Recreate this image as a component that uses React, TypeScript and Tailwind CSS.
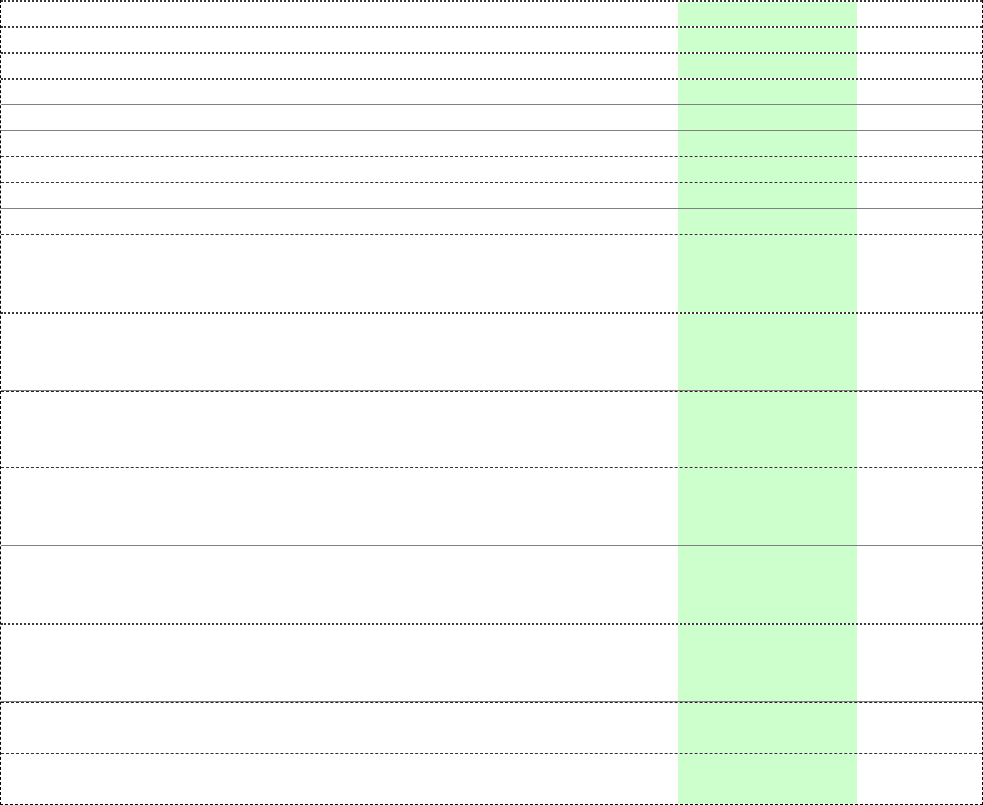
import React from 'react'

type Line = 'wavy' | 'solid' | 'dashed' | 'double'

const rows: { h: number; line: Line }[] = [
  { h: 26, line: 'wavy' },
  { h: 26, line: 'wavy' },
  { h: 26, line: 'wavy' },
  { h: 26, line: 'wavy' },
  { h: 26, line: 'solid' },
  { h: 26, line: 'solid' },
  { h: 26, line: 'dashed' },
  { h: 26, line: 'dashed' },
  { h: 26, line: 'solid' },
  { h: 78, line: 'dashed' },
  { h: 78, line: 'wavy' },
  { h: 77, line: 'double' },
  { h: 78, line: 'dashed' },
  { h: 78, line: 'solid' },
  { h: 78, line: 'wavy' },
  { h: 52, line: 'double' },
  { h: 51, line: 'dashed' },
]

const lineClass: Record<Line, string> = {
  wavy: 'border-t-2 border-dotted border-[#3a3a3a]',
  solid: 'border-t border-solid border-[#808080]',
  dashed: 'border-t border-dashed border-[#333]',
  double: 'border-t border-solid border-[#808080]',
}

export default function App() {
  return (
    <div className="w-[983px] h-[805px] bg-white">
      <div className="w-[983px] border-x border-dashed border-black border-b">
        {rows.map((r, i) => (
          <div key={i} className={`box-border flex flex-col ${lineClass[r.line]}`} style={{ height: r.h }}>
            <div
              className={`grid flex-1 grid-cols-[677px_179px_1fr] ${
                r.line === 'double' ? 'border-t border-dashed border-[#222]' : ''
              }`}
            >
              <div />
              <div className="bg-[#ccffcc]" />
              <div />
            </div>
          </div>
        ))}
      </div>
    </div>
  )
}
